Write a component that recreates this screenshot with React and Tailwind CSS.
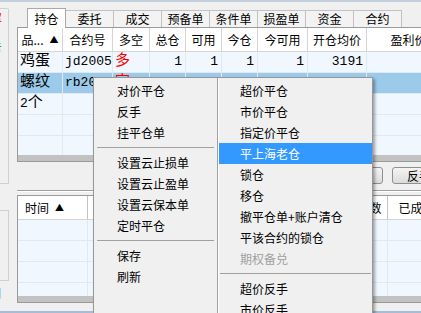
import React from 'react';

const posCols = [
  { label: '品...', w: 'w-[45px]', sort: true },
  { label: '合约号', w: 'w-[50px]' },
  { label: '多空', w: 'w-[37px]' },
  { label: '总仓', w: 'w-[36px]' },
  { label: '可用', w: 'w-[36px]' },
  { label: '今仓', w: 'w-[36px]' },
  { label: '今可用', w: 'w-[50px]' },
  { label: '开仓均价', w: 'w-[59px]' },
  { label: '盈利价差', w: 'w-[96px]' },
];

const posRows = [
  { cells: ['鸡蛋', 'jd2005', '多', '1', '1', '1', '1', '3191', ''] },
  { cells: ['螺纹', 'rb2010', '空', '2', '2', '0', '0', '3705', ''], selected: true },
  { cells: ['2个', '', '', '', '', '', '', '', ''] },
  { cells: ['', '', '', '', '', '', '', '', ''] },
  { cells: ['', '', '', '', '', '', '', '', ''] },
];

const orderCols = [
  { label: '时间', w: 'w-[70px]', sort: true },
  { label: '合约', w: 'w-[62px]' },
  { label: '买卖', w: 'w-[40px]' },
  { label: '开平', w: 'w-[40px]' },
  { label: '委托价', w: 'w-[62px]' },
  { label: '状态', w: 'w-[48px]' },
  { label: '委托数', w: 'w-[48px]' },
  { label: '已成交数', w: 'w-[70px]' },
];

const tabs = ['委托', '成交', '预备单', '条件单', '损盈单', '资金', '合约'];

const leftMenu = ['对价平仓', '反手', '挂平仓单', '-', '设置云止损单', '设置云止盈单', '设置云保本单', '定时平仓', '-', '保存', '刷新'];
const rightMenu = [
  '超价平仓', '市价平仓', '指定价平仓', { t: '平上海老仓', active: true }, '锁仓', '移仓',
  '撤平仓单+账户清仓', '平该合约的锁仓', { t: '期权备兑', disabled: true }, '-', '超价反手', '市价反手',
];

const SortMark = () => <span className="ml-[6px] text-[9px] leading-none">▲</span>;

const PosCell = ({ col, value, i, selected }) => {
  const isNum = i >= 3;
  const isCjk = /[\u4e00-\u9fa5]/.test(value);
  return (
    <div
      className={`${col.w} shrink-0 h-full flex items-center border-r border-[#e1e8ef] ${
        isNum ? 'justify-end pr-[3px]' : 'pl-[2px]'
      }`}
    >
      {value === '2个' ? (
        <>
          <span>2</span>
          <span className="text-[15px]">个</span>
        </>
      ) : (
        <span className={`${isCjk ? 'text-[15px]' : ''} ${value === '多' || (value === '空' && selected) ? 'text-[#ff0000]' : ''}`}>
          {value}
        </span>
      )}
    </div>
  );
};

function MenuItem({ item, pl }) {
  if (item === '-') {
    return (
      <div className={`h-[9px] flex items-center ${pl === 'left' ? 'mx-[3px]' : 'mx-px'}`}>
        <div className="h-px w-full bg-[#a0a0a0]" />
      </div>
    );
  }
  const t = typeof item === 'string' ? item : item.t;
  const active = item.active;
  const disabled = item.disabled;
  return (
    <div
      className={`h-[21px] flex items-center whitespace-nowrap ${pl === 'left' ? 'pl-[23px]' : 'pl-[21px]'} ${
        active ? 'bg-[#3399ff] text-white' : disabled ? 'text-[#a0a0a0]' : 'text-black'
      }`}
    >
      {t}
    </div>
  );
}

export default function App() {
  return (
    <div className="relative w-[421px] h-[313px] overflow-hidden bg-[#f0f0f0] flex flex-col text-[12px] text-black font-['Noto_Sans_CJK_SC',sans-serif]">
      <div className="h-[2px] shrink-0 bg-[#c3cfdc]" />

      <div className="flex-1 flex min-h-0">
        {/* left strip */}
        <div className="w-[17px] shrink-0 flex flex-col">
          <div className="mt-[6px] h-[176px] w-[9px] border-t border-r border-b border-[#cfcfcf] rounded-tr-[2px] overflow-hidden flex flex-col">
            <div className="-ml-[10px] leading-[14px] text-[#ff0000]">盈</div>
            <div className="-ml-[10px] mt-[18px] leading-[14px] text-[#00a000]">亏</div>
          </div>
          <div className="mt-[26px] h-[71px] w-[9px] border-t border-r border-b border-[#cfcfcf] overflow-hidden" />
          <div className="mt-[5px] w-[2px] overflow-hidden">
            <div className="-ml-[10px] leading-[14px]">日</div>
          </div>
        </div>

        {/* main column */}
        <div className="flex-1 min-w-0 flex flex-col overflow-hidden">
          {/* tabs */}
          <div className="mt-[6px] h-[19px] shrink-0 flex items-end pl-[10px]">
            <div className="relative z-10 -mb-px w-[39px] h-[20px] shrink-0 bg-white border-t border-l border-r border-[#a9a9a9] flex items-center justify-center">
              持仓
            </div>
            {tabs.map((t) => (
              <div
                key={t}
                className="w-[48px] h-[17px] shrink-0 bg-[#f3f3f3] border-t border-r border-[#c2c2c2] flex items-center justify-center"
              >
                {t}
              </div>
            ))}
          </div>

          {/* positions grid */}
          <div className="h-[135px] shrink-0 border-t border-l border-b border-[#9a9a9a] flex flex-col">
            <div className="h-[24px] shrink-0 flex bg-white border-b border-[#d5d5d5]">
              {posCols.map((c) => (
                <div key={c.label} className={`${c.w} shrink-0 flex items-center justify-center border-r border-[#d5d5d5] whitespace-nowrap`}>
                  {c.label}
                  {c.sort && <SortMark />}
                </div>
              ))}
            </div>
            <div className="flex-1 min-h-0 overflow-hidden bg-[#f0f7ff] font-['Liberation_Mono','Noto_Sans_CJK_SC',monospace] text-[13px]">
              {posRows.map((r, ri) => (
                <div key={ri} className={`h-[21px] flex border-b border-[#e1e8ef] ${r.selected ? 'bg-[#9ccaea]' : ''}`}>
                  {posCols.map((c, i) => (
                    <PosCell key={i} col={c} value={r.cells[i]} i={i} selected={r.selected} />
                  ))}
                </div>
              ))}
            </div>
            <div className="h-[6px] shrink-0 bg-[#c2c2c2]" />
          </div>

          {/* buttons */}
          <div className="mt-[5px] h-[17px] shrink-0 flex gap-[9px] pl-[99px]">
            {[['平仓', 'w-[83px]'], ['撤单', 'w-[83px]'], ['全撤', 'w-[83px]'], ['反手下单', 'w-[78px]']].map(([t, w]) => (
              <button
                key={t}
                className={`${w} h-full shrink-0 rounded-[3px] border border-[#8e8f8f] bg-linear-to-b from-[#f4f4f4] to-[#dcdcdc] flex items-center justify-center text-[12px] leading-none`}
              >
                {t}
              </button>
            ))}
          </div>

          {/* splitter */}
          <div className="mt-[6px] h-px shrink-0 bg-[#a0a0a0]" />
          <div className="h-px shrink-0 bg-white" />

          {/* orders grid */}
          <div className="mt-[3px] h-[108px] shrink-0 border-t border-l border-b border-[#9a9a9a] flex flex-col">
            <div className="h-[24px] shrink-0 flex bg-white border-b border-[#d5d5d5]">
              {orderCols.map((c, i) => (
                <div
                  key={c.label}
                  className={`${c.w} shrink-0 flex items-center border-r border-[#c4c4c4] whitespace-nowrap ${
                    i === 0 ? 'pl-[7px]' : 'justify-center'
                  }`}
                >
                  {c.label}
                  {c.sort && <SortMark />}
                </div>
              ))}
            </div>
            <div className="flex-1 min-h-0 overflow-hidden bg-[#f0f7ff]">
              {[0, 1, 2, 3].map((r) => (
                <div key={r} className="h-[21px] flex border-b border-[#e1e8ef]">
                  {orderCols.map((c) => (
                    <div key={c.label} className={`${c.w} shrink-0 h-full border-r border-[#e1e8ef]`} />
                  ))}
                </div>
              ))}
            </div>
            <div className="h-[6px] shrink-0 bg-[#c2c2c2]" />
          </div>
        </div>
      </div>

      <div className="h-[2px] shrink-0 bg-[#a5bdd9]" />

      {/* context menu */}
      <div className="absolute left-[93px] top-[77px] w-[280px] h-[250px] z-20 bg-[#f0f0f0] border border-[#979797] shadow-[2px_2px_3px_rgba(0,0,0,0.35)] flex text-[12px]">
        <div className="w-[123px] shrink-0 pt-[2px]">
          {leftMenu.map((it, i) => (
            <MenuItem key={i} item={it} pl="left" />
          ))}
        </div>
        <div className="w-[2px] shrink-0 border-l border-[#a0a0a0] border-r border-r-white" />
        <div className="flex-1 pt-[2px]">
          {rightMenu.map((it, i) => (
            <MenuItem key={i} item={it} pl="right" />
          ))}
        </div>
      </div>
    </div>
  );
}
